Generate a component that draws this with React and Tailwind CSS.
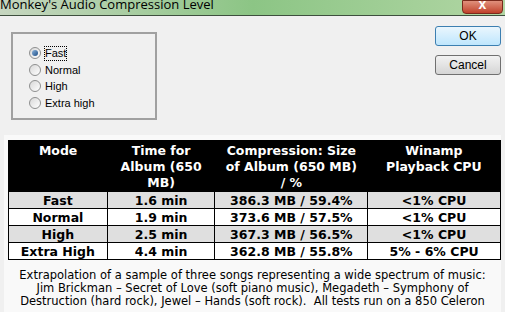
import React from "react";

const rows = [
  { mode: "Fast", time: "1.6 min", size: "386.3 MB / 59.4%", cpu: "<1% CPU", shade: true },
  { mode: "Normal", time: "1.9 min", size: "373.6 MB / 57.5%", cpu: "<1% CPU", shade: false },
  { mode: "High", time: "2.5 min", size: "367.3 MB / 56.5%", cpu: "<1% CPU", shade: true },
  { mode: "Extra High", time: "4.4 min", size: "362.8 MB / 55.8%", cpu: "5% - 6% CPU", shade: false },
];

function Radio({ checked }) {
  return (
    <span className="relative flex h-[12px] w-[12px] items-center justify-center rounded-full border border-[#8e8f8f] bg-gradient-to-br from-[#d8d8d8] to-[#ffffff]">
      {checked && <span className="h-[6px] w-[6px] rounded-full bg-gradient-to-br from-[#8ab3dc] to-[#1d4f86]" />}
    </span>
  );
}

export default function App() {
  const options = ["Fast", "Normal", "High", "Extra high"];

  return (
    <div className="w-[505px] h-[312px] overflow-hidden bg-[#f0f0f0] font-['Liberation_Sans',sans-serif]">
      {/* title bar */}
      <div className="relative h-[16px] border-b border-[#3e4f3e] bg-gradient-to-r from-[#c6d6c0] via-[#8cc585] to-[#b1d6a4] overflow-hidden">
        <div className="-mt-[5px] pl-0 text-[13px] leading-[18px] text-black font-['Open_Sans',sans-serif]">
          Monkey's Audio Compression Level
        </div>
        <div className="absolute right-[2px] top-0 flex h-[14px] w-[41px] items-start justify-center rounded-b-[4px] border border-[#7a2a1c] bg-gradient-to-b from-[#e0907c] to-[#c0402a]">
          <span className="-mt-[6px] text-[14px] font-bold leading-[18px] text-white">x</span>
        </div>
      </div>

      {/* dialog body */}
      <div className="flex h-[119px] justify-between">
        <div className="ml-[11px] mt-[16px] h-[88px] w-[146px] border-2 border-[#a0a0a0] bg-[#f0f0f0]">
          <div className="ml-[16px] mt-[13px] flex flex-col gap-[4px] text-[11px] leading-[12.5px] text-black">
            {options.map((o, i) => (
              <div key={o} className="flex items-center gap-[4px]">
                <Radio checked={i === 0} />
                <span className={i === 0 ? "outline outline-1 outline-dotted outline-black" : ""}>{o}</span>
              </div>
            ))}
          </div>
        </div>
        <div className="mr-[4px] mt-[10px] flex flex-col gap-[9px]">
          <button className="h-[20px] w-[66px] rounded-[3px] border border-[#3c7fb1] bg-gradient-to-b from-[#eaf6fd] to-[#bee6fd] text-[12px] text-black">
            OK
          </button>
          <button className="h-[20px] w-[66px] rounded-[3px] border border-[#707070] bg-gradient-to-b from-[#f2f2f2] to-[#d5d5d5] text-[12px] text-black">
            Cancel
          </button>
        </div>
      </div>

      {/* page */}
      <div className="mx-[4px] h-[177px] bg-[#f9f9f9] px-[4px] pt-[5px] font-['DejaVu_Sans',sans-serif]">
        <table className="w-[493px] border-collapse border border-black text-center">
          <thead>
            <tr className="bg-black text-white text-[12.5px] font-bold leading-[16px] align-top">
              <th className="h-[50px] w-[99px] px-[4px] pt-[2px] font-bold">Mode</th>
              <th className="w-[108px] px-[6px] pt-[2px] font-bold">Time for Album (650 MB)</th>
              <th className="w-[153px] px-[10px] pt-[2px] font-bold">Compression: Size of Album (650 MB) / %</th>
              <th className="w-[133px] px-[8px] pt-[2px] font-bold">Winamp Playback CPU</th>
            </tr>
          </thead>
          <tbody>
            {rows.map((r) => (
              <tr key={r.mode} className={(r.shade ? "bg-[#dfdfdf] " : "bg-white ") + "text-[12.5px] font-bold leading-[15px] text-black"}>
                <td className="h-[17px] border border-black p-0">{r.mode}</td>
                <td className="border border-black p-0">{r.time}</td>
                <td className="border border-black p-0">{r.size}</td>
                <td className="border border-black p-0">{r.cpu}</td>
              </tr>
            ))}
          </tbody>
        </table>
        <p className="mt-[9px] text-center text-[11.5px] leading-[13px] text-black">
          Extrapolation of a sample of three songs representing a wide spectrum of music:
          <br />
          Jim Brickman – Secret of Love (soft piano music), Megadeth – Symphony of
          <br />
          Destruction (hard rock), Jewel – Hands (soft rock).&nbsp; All tests run on a 850 Celeron
        </p>
      </div>
    </div>
  );
}
